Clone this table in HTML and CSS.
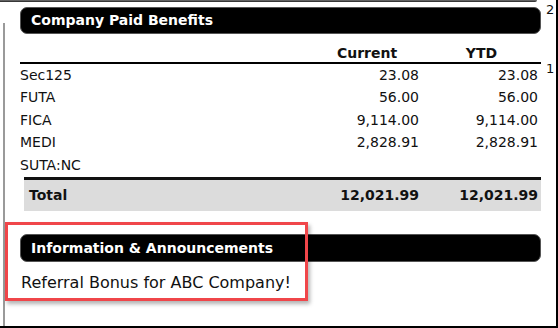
FILE: index.html
```html
<!DOCTYPE html>
<html>
<head>
<meta charset="utf-8">
<link rel="stylesheet" href="styles.css">
</head>
<body>
<div class="page">
  <div class="prev-edge"></div>
  <div class="frame-line"></div>
  <span class="pnum pnum-2">2</span>
  <span class="pnum pnum-1">1</span>
  <div class="content">
    <div class="bar">Company Paid Benefits</div>
    <table class="grid">
      <colgroup><col class="c1"><col class="c2"><col class="c3"></colgroup>
      <thead>
        <tr><th></th><th>Current</th><th>YTD</th></tr>
      </thead>
      <tbody>
        <tr><td>Sec125</td><td class="num">23.08</td><td class="num">23.08</td></tr>
        <tr><td>FUTA</td><td class="num">56.00</td><td class="num">56.00</td></tr>
        <tr><td>FICA</td><td class="num">9,114.00</td><td class="num">9,114.00</td></tr>
        <tr><td>MEDI</td><td class="num">2,828.91</td><td class="num">2,828.91</td></tr>
        <tr><td>SUTA:NC</td><td class="num"></td><td class="num"></td></tr>
      </tbody>
    </table>
    <table class="total">
      <colgroup><col class="t1"><col class="c2"><col class="c3"></colgroup>
      <tr><td>Total</td><td class="num">12,021.99</td><td class="num">12,021.99</td></tr>
    </table>
    <div class="bar bar-info">Information &amp; Announcements</div>
    <p class="note">Referral Bonus for ABC Company!</p>
  </div>
  <div class="highlight"></div>
</div>
</body>
</html>
```
FILE: styles.css
```css
html, body {
  margin: 0;
  padding: 0;
  background: #fff;
}
.page {
  position: relative;
  width: 558px;
  height: 328px;
  box-sizing: border-box;
  border-right: 2px solid #000;
  border-bottom: 2px solid #000;
  overflow: hidden;
  font-family: "DejaVu Sans", Verdana, sans-serif;
  color: #111;
}
.prev-edge {
  height: 2px;
  width: 537px;
  background: linear-gradient(#777, #222);
  border-bottom-right-radius: 3px;
}
.frame-line {
  position: absolute;
  left: 3px;
  top: 23px;
  bottom: 0;
  width: 2px;
  background: #9a9a9a;
}
.pnum {
  position: absolute;
  left: 546px;
  font-size: 13px;
  line-height: 13px;
  color: #111;
}
.pnum-2 { top: 3px; }
.pnum-1 { top: 62px; }
.content {
  margin-left: 20px;
  width: 521px;
  padding-top: 5px;
}
.bar {
  height: 27px;
  box-sizing: border-box;
  background: #000;
  border: 1px solid #555;
  border-radius: 7px;
  color: #fff;
  font-weight: bold;
  font-size: 14px;
  line-height: 25px;
  padding-left: 10px;
}
.grid, .total {
  border-collapse: collapse;
  table-layout: fixed;
  font-size: 14px;
}
.grid { width: 521px; }
.c1 { width: 292px; }
.c2 { width: 110px; }
.c3 { width: 119px; }
.t1 { width: 288px; }
.grid th {
  font-weight: bold;
  text-align: center;
  padding: 11px 0 0;
  height: 17px;
  line-height: 17px;
  border-bottom: 2px solid #000;
}
.grid td {
  height: 22.5px;
  padding: 0;
  line-height: 17px;
  vertical-align: middle;
}
.num {
  text-align: right;
  padding-right: 3px !important;
}
.total {
  width: 517px;
  margin-left: 4px;
  background: #dcdcdc;
  border-top: 3px solid #111;
  font-weight: bold;
}
.total td {
  height: 31px;
  padding: 0;
  line-height: 17px;
}
.total td:first-child { padding-left: 5px; }
.bar-info {
  margin-top: 23px;
  height: 28px;
  line-height: 26px;
}
.note {
  margin: 0;
  padding-top: 11px;
  font-size: 16px;
  line-height: 19px;
  padding-left: 1px;
}
.highlight {
  position: absolute;
  left: 5px;
  top: 222px;
  width: 303px;
  height: 79px;
  box-sizing: border-box;
  border: 3px solid #f0464a;
  box-shadow: 2px 3px 4px rgba(0, 0, 0, 0.3);
}
```
